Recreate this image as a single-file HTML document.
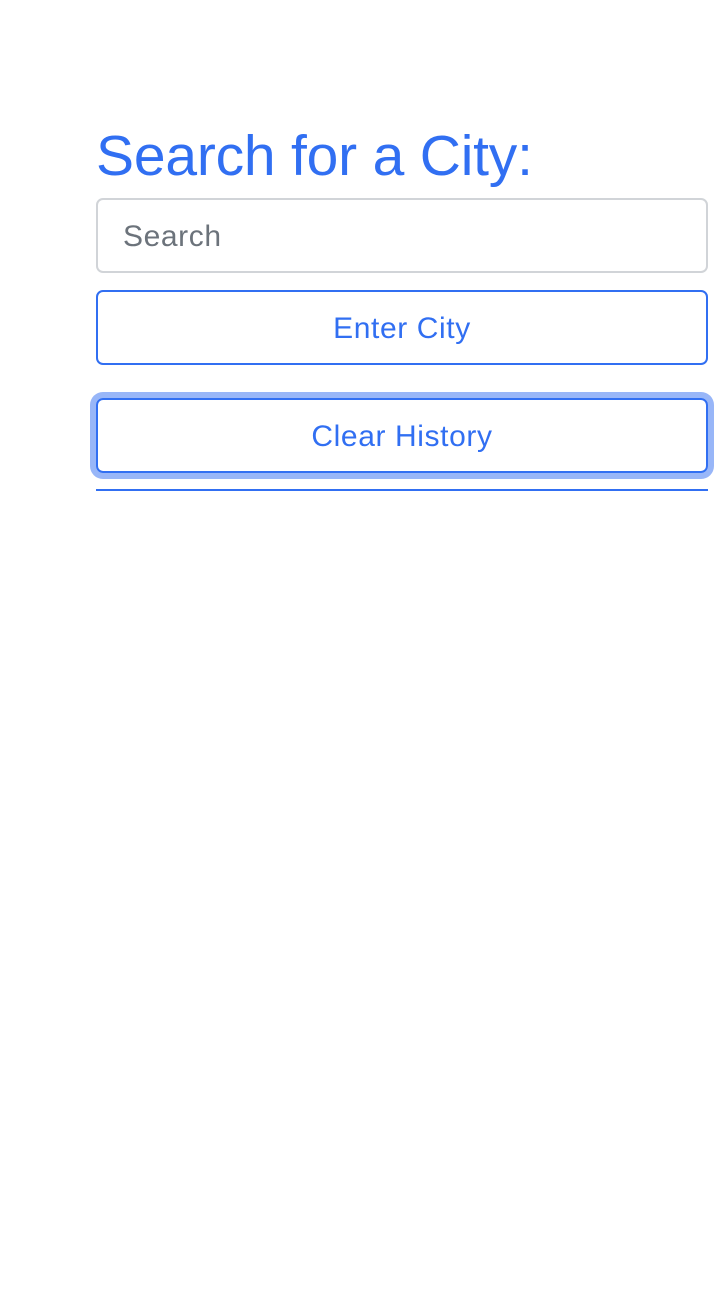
<!DOCTYPE html>
<html><head><style>
body{margin:0;background:#fff;font-family:"Liberation Sans",Arial,sans-serif;}
h1{position:absolute;left:96px;top:118px;margin:0;font-size:57px;font-weight:400;color:#316ff2;line-height:76px;letter-spacing:-0.2px}
.box{position:absolute;left:96px;width:612px;height:75px;box-sizing:border-box;border-radius:7px;font-size:30px;letter-spacing:0.6px;display:flex;align-items:center;padding-top:3px}
.inp{top:198px;border:2px solid #d1d4d8;color:#6c737b;padding-left:25px}
.btn{border:2px solid #316ff2;color:#316ff2;justify-content:center}
.b1{top:290px}
.b2{top:398px;box-shadow:0 0 0 6px #98b6f8}
.hr{position:absolute;left:96px;top:489px;width:612px;height:2px;background:#316ff2}
</style></head><body>
<h1>Search for a City:</h1>
<div class="box inp">Search</div>
<div class="box btn b1">Enter City</div>
<div class="box btn b2">Clear History</div>
<div class="hr"></div>
</body></html>
